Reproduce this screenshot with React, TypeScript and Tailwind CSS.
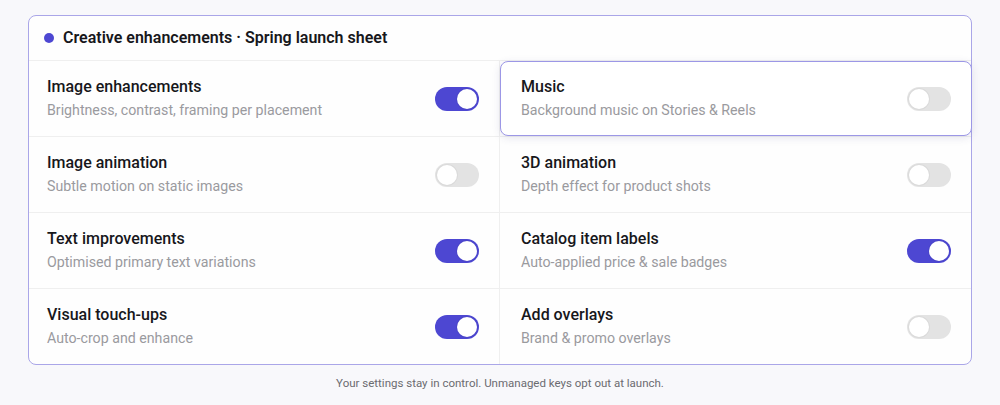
import React from "react";

type Setting = { title: string; desc: string; on: boolean; focus?: boolean };

const rows: [Setting, Setting][] = [
  [
    { title: "Image enhancements", desc: "Brightness, contrast, framing per placement", on: true },
    { title: "Music", desc: "Background music on Stories & Reels", on: false, focus: true },
  ],
  [
    { title: "Image animation", desc: "Subtle motion on static images", on: false },
    { title: "3D animation", desc: "Depth effect for product shots", on: false },
  ],
  [
    { title: "Text improvements", desc: "Optimised primary text variations", on: true },
    { title: "Catalog item labels", desc: "Auto-applied price & sale badges", on: true },
  ],
  [
    { title: "Visual touch-ups", desc: "Auto-crop and enhance", on: true },
    { title: "Add overlays", desc: "Brand & promo overlays", on: false },
  ],
];

function Toggle({ on }: { on: boolean }) {
  return (
    <div
      className={`flex h-6 w-11 shrink-0 items-center rounded-full p-[2px] ${
        on ? "justify-end bg-[#4d47d2]" : "justify-start bg-[#e3e3e3]"
      }`}
    >
      <div className="h-5 w-5 rounded-full bg-white shadow-[0_0_0_1px_rgba(0,0,0,0.04)]" />
    </div>
  );
}

function Cell({ s, right }: { s: Setting; right?: boolean }) {
  return (
    <div
      className={`relative flex h-[75px] items-center justify-between ${
        right ? "pl-[21px] pr-[20px]" : "pl-[18px] pr-[20px] border-r border-[#efefef]"
      }`}
    >
      {s.focus && (
        <div className="pointer-events-none absolute inset-0 -right-px rounded-lg border border-[#9c97e6] bg-white shadow-[0_2px_8px_rgba(60,60,120,0.12)]" />
      )}
      <div className="relative">
        <div className="text-[16px] font-medium leading-5 text-[#17171b]">{s.title}</div>
        <div className="mt-[3px] text-[14.2px] leading-5 text-[#9a9a9e]">{s.desc}</div>
      </div>
      <div className="relative">
        <Toggle on={s.on} />
      </div>
    </div>
  );
}

export default function App() {
  return (
    <div className="min-h-[405px] bg-[#f8f8fb] pt-[15px] font-['Roboto',sans-serif]">
      <div className="mx-[28px] rounded-lg border border-[#aaa6e8] bg-[#fefefe]">
        <div className="flex h-[45px] items-center gap-[9px] border-b border-[#efefef] pl-[15px]">
          <span className="h-[10px] w-[10px] rounded-full bg-[#4d47d2]" />
          <span className="text-[16px] font-semibold text-[#17171b]">
            Creative enhancements · Spring launch sheet
          </span>
        </div>
        {rows.map((r, i) => (
          <div
            key={i}
            className={`grid grid-cols-2 ${i < rows.length - 1 ? "border-b border-[#efefef]" : ""}`}
          >
            <Cell s={r[0]} />
            <Cell s={r[1]} right />
          </div>
        ))}
      </div>
      <p className="mt-[10px] text-center text-[11.5px] leading-4 text-[#6b6b70]">
        Your settings stay in control. Unmanaged keys opt out at launch.
      </p>
    </div>
  );
}
